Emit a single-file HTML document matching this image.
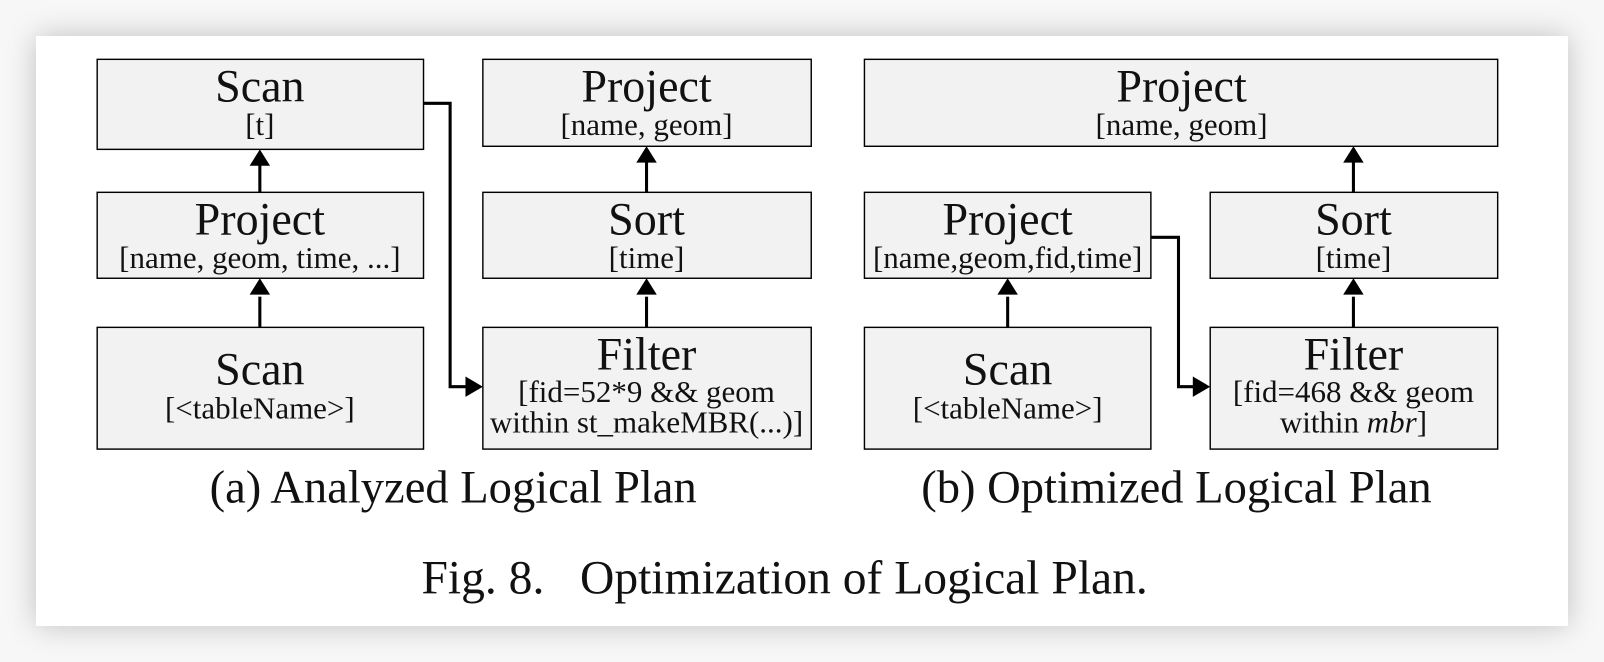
<!DOCTYPE html>
<html><head><style>
html,body{margin:0;padding:0;width:1604px;height:662px;background:#f7f7f7;overflow:hidden}
.card{position:absolute;left:36px;top:36px;width:1532px;height:590px;background:#fff;box-shadow:0 0 28px rgba(0,0,0,0.22)}
svg{position:absolute;left:0;top:0}
text{font-family:"Liberation Serif",serif;fill:#111}
.t{font-size:45px}.s{font-size:30.3px}.c{font-size:45.5px}.f{font-size:46.5px}
rect{fill:#f2f2f2;stroke:#000;stroke-width:1.4}
.l{stroke:#000;stroke-width:3;fill:none}
</style></head><body>
<div class="card"></div>
<svg width="1604" height="662">
<g transform="scale(1.023)">
<g>
<rect x="95" y="58" width="319" height="88"/>
<text class="t" x="254" y="99" text-anchor="middle">Scan</text>
<text class="s" x="254" y="132" text-anchor="middle">[t]</text>
<rect x="95" y="188" width="319" height="84"/>
<text class="t" x="254" y="229" text-anchor="middle">Project</text>
<text class="s" x="254" y="262" text-anchor="middle">[name, geom, time, ...]</text>
<rect x="95" y="320" width="319" height="119"/>
<text class="t" x="254" y="376" text-anchor="middle">Scan</text>
<text class="s" x="254" y="409" text-anchor="middle">[&lt;tableName&gt;]</text>

<rect x="472" y="58" width="321" height="85"/>
<text class="t" x="632" y="99" text-anchor="middle">Project</text>
<text class="s" x="632" y="132" text-anchor="middle">[name, geom]</text>
<rect x="472" y="188" width="321" height="84"/>
<text class="t" x="632" y="229" text-anchor="middle">Sort</text>
<text class="s" x="632" y="262" text-anchor="middle">[time]</text>
<rect x="472" y="320" width="321" height="119"/>
<text class="t" x="632" y="361" text-anchor="middle">Filter</text>
<text class="s" x="632" y="393" text-anchor="middle">[fid=52*9 &amp;&amp; geom</text>
<text class="s" x="632" y="423" text-anchor="middle">within st_makeMBR(...)]</text>

<rect x="845" y="58" width="619" height="85"/>
<text class="t" x="1155" y="99" text-anchor="middle">Project</text>
<text class="s" x="1155" y="132" text-anchor="middle">[name, geom]</text>
<rect x="845" y="188" width="280" height="84"/>
<text class="t" x="985" y="229" text-anchor="middle">Project</text>
<text class="s" x="985" y="262" text-anchor="middle">[name,geom,fid,time]</text>
<rect x="845" y="320" width="280" height="119"/>
<text class="t" x="985" y="376" text-anchor="middle">Scan</text>
<text class="s" x="985" y="409" text-anchor="middle">[&lt;tableName&gt;]</text>
<rect x="1183" y="188" width="281" height="84"/>
<text class="t" x="1323" y="229" text-anchor="middle">Sort</text>
<text class="s" x="1323" y="262" text-anchor="middle">[time]</text>
<rect x="1183" y="320" width="281" height="119"/>
<text class="t" x="1323" y="361" text-anchor="middle">Filter</text>
<text class="s" x="1323" y="393" text-anchor="middle">[fid=468 &amp;&amp; geom</text>
<text class="s" x="1323" y="423" text-anchor="middle">within <tspan font-style="italic">mbr</tspan>]</text>
</g>
<g class="l">
<path d="M254,188 V158"/><path d="M254,320 V290"/>
<path d="M632,188 V155"/><path d="M632,320 V290"/>
<path d="M985,320 V290"/><path d="M1323,320 V290"/><path d="M1323,188 V158"/>
<path d="M414,101 H440 V378 H458"/>
<path d="M1125,232 H1152 V378 H1170"/>
</g>
<g fill="#000">
<path d="M254,146 L244,162 L264,162z"/><path d="M254,272 L244,288 L264,288z"/>
<path d="M632,143 L622,159 L642,159z"/><path d="M632,272 L622,288 L642,288z"/>
<path d="M985,272 L975,288 L995,288z"/><path d="M1323,272 L1313,288 L1333,288z"/>
<path d="M1323,143 L1313,159 L1333,159z"/>
<path d="M472,378 L455,368 L455,388z"/><path d="M1183,378 L1166,368 L1166,388z"/>
</g>
<text class="c" x="443" y="491" text-anchor="middle">(a) Analyzed Logical Plan</text>
<text class="c" x="1150" y="491" text-anchor="middle">(b) Optimized Logical Plan</text>
<text class="f" x="767" y="580" text-anchor="middle" xml:space="preserve">Fig. 8.   Optimization of Logical Plan.</text>
</g>
</svg>
</body></html>
